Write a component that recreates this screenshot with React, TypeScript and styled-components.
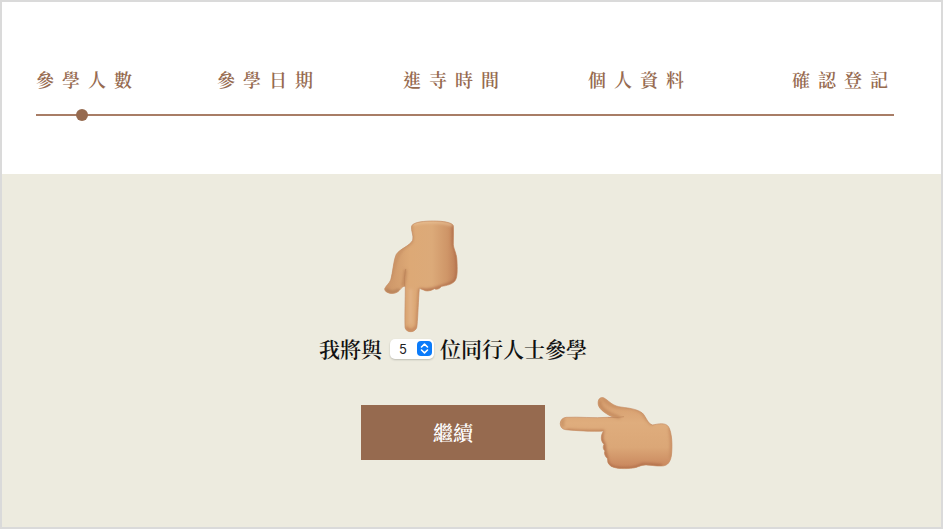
import React, { useState } from "react";
import styled, { createGlobalStyle } from "styled-components";

const brown = "#966a4f";
const cjkSerif = `"Noto Serif CJK TC", "Noto Sans CJK TC", serif`;

const GlobalStyle = createGlobalStyle`
  *, *::before, *::after { box-sizing: border-box; }
  body { margin: 0; background: #fff; font-family: ${cjkSerif}; }
`;

const Page = styled.div`
  display: flex;
  flex-direction: column;
  min-height: 100vh;
  border: 2px solid #dadada;
`;

const Header = styled.header`
  padding: 63px 47px 53px 34px;
  background: #fff;
`;

const Steps = styled.ol`
  display: grid;
  grid-template-columns: 181fr 186fr 185fr 204fr 102fr;
  margin: 0;
  padding: 0;
  list-style: none;
`;

const Step = styled.li`
  min-width: 0;
  color: ${brown};
  font-size: 18px;
  font-weight: 600;
  line-height: 28px;
  letter-spacing: 8px;
  white-space: nowrap;
`;

const Track = styled.div`
  display: flex;
  align-items: center;
  height: 12px;
  margin-top: 16px;
  padding-left: 40px;
  background: linear-gradient(#a87d66, #a87d66) center / 100% 2px no-repeat;
`;

const Dot = styled.span`
  width: 12px;
  height: 12px;
  border-radius: 50%;
  background: ${brown};
`;

const Main = styled.main`
  flex: 1;
  padding: 160px 37px 64px 0;
  background: #edebdf;
`;

const Form = styled.form`
  display: flex;
  flex-direction: column;
  align-items: center;
  gap: 43px;
`;

const Sentence = styled.label`
  display: flex;
  align-items: flex-start;
  color: #111;
  font-size: 21px;
  font-weight: 600;
  line-height: 28px;
  white-space: nowrap;
`;

const SelectWrap = styled.span`
  position: relative;
  display: flex;
  margin: 5px 6px 0 8px;
`;

const Select = styled.select`
  appearance: none;
  width: 44px;
  height: 20px;
  padding: 0 0 0 9px;
  border: 0;
  border-radius: 5px;
  background: #fff;
  box-shadow: 0 1px 2px rgba(0, 0, 0, 0.2);
  color: #222;
  font-family: Inter, sans-serif;
  font-size: 13px;
  line-height: 20px;
`;

const Arrows = styled.svg`
  position: absolute;
  top: 2px;
  right: 2px;
  width: 15px;
  height: 15px;
  pointer-events: none;
`;

const ButtonWrap = styled.div`
  position: relative;
`;

const Continue = styled.button`
  display: block;
  width: 184px;
  height: 55px;
  border: 0;
  background: ${brown};
  color: #fff;
  font-family: ${cjkSerif};
  font-size: 20px;
  font-weight: 600;
  line-height: 30px;
`;

const DownHand = styled.svg`
  position: absolute;
  top: -130px;
  left: -20px;
  width: 110px;
  height: 130px;
  pointer-events: none;
`;

const LeftHand = styled.svg`
  position: absolute;
  top: -20px;
  left: 189px;
  width: 135px;
  height: 95px;
  pointer-events: none;
`;

const steps = ["參學人數", "參學日期", "進寺時間", "個人資料", "確認登記"];

function PointingDown() {
  const outline =
    "M125 51 C130 38 168 36 190 36 C218 36 246 40 250 50 C251 65 250 91 250 107 C252 124 260 132 261 156 C262 179 263 203 256 214 C248 226 230 230 215 232 C207 241 200 242 193 239 C182 246 169 248 161 243 C155 241 151 239 148 238 C145 274 144 319 141 350 C140 373 106 374 105 353 C104 318 106 270 106 231 C98 232 94 237 89 243 C77 260 43 254 44 239 C49 229 58 223 62 213 C69 190 70 155 79 136 C90 119 119 111 128 94 C132 78 122 66 125 51 Z";
  return (
    <DownHand viewBox="0 0 330 390" aria-hidden="true">
      <defs>
        <linearGradient id="downSkin" x1="0" x2="1" y1="0" y2="0">
          <stop offset="0" stopColor="#cb9467" />
          <stop offset="0.35" stopColor="#dda976" />
          <stop offset="0.65" stopColor="#dcaa79" />
          <stop offset="0.86" stopColor="#cf9668" />
          <stop offset="1" stopColor="#bd7d56" />
        </linearGradient>
        <clipPath id="downClip"><path d={outline} /></clipPath>
        <filter id="downSoft" x="-20%" y="-20%" width="140%" height="140%">
          <feGaussianBlur stdDeviation="4" />
        </filter>
      </defs>
      <path d={outline} fill="url(#downSkin)" />
      <g clipPath="url(#downClip)">
        <g fill="none" filter="url(#downSoft)">
          <path d="M251 45 V107 C266 138 267 205 255 216 C233 230 221 230 210 235 Q180 248 150 242" stroke="#ad6b48" strokeWidth="8" />
          <path d="M125 48 C120 72 135 83 123 102 C85 121 79 146 62 211" stroke="#c48c60" strokeWidth="6" />
          <path d="M98 232 Q104 218 106 182" stroke="#bb8055" strokeWidth="7" />
          <path d="M47 241 Q66 258 89 242" stroke="#b07b55" strokeWidth="8" />
          <path d="M148 240 L141 353" stroke="#bf8159" strokeWidth="7" />
          <path d="M122 240 V345" stroke="#e2b286" strokeWidth="10" />
          <path d="M129 44 Q191 31 248 47" stroke="#ebc49a" strokeWidth="6" />
          <path d="M108 354 Q120 375 141 353" stroke="#b9744f" strokeWidth="6" />
        </g>
        <path d="M107 180 Q101 205 104 234" fill="none" stroke="#b98258" strokeWidth="2" />
      </g>
      <path d={outline} fill="none" stroke="#c48b62" strokeWidth="2" />
    </DownHand>
  );
}

function PointingLeft() {
  const outline =
    "M161 138 C129 140 76 137 47 134 C25 132 25 99 49 97 C87 95 133 100 174 97 L190 97 C174 90 149 76 145 60 C142 44 150 34 162 39 C174 45 184 60 206 65 C230 69 258 70 277 84 C289 96 293 117 308 120 C323 117 347 111 356 126 C366 145 367 178 365 204 C363 231 353 243 335 243 C319 244 303 240 289 240 C272 239 263 249 241 250 C219 252 187 251 178 239 C169 230 177 221 168 216 C162 207 163 201 165 198 C158 192 159 184 162 178 C152 169 151 151 161 138 Z";
  return (
    <LeftHand viewBox="0 0 405 285" aria-hidden="true">
      <defs>
        <linearGradient id="leftSkin" x1="0" x2="0" y1="0" y2="1">
          <stop offset="0" stopColor="#d39a6b" />
          <stop offset="0.35" stopColor="#dfad7d" />
          <stop offset="0.7" stopColor="#dba777" />
          <stop offset="1" stopColor="#c8855c" />
        </linearGradient>
        <clipPath id="leftClip"><path d={outline} /></clipPath>
        <filter id="leftSoft" x="-20%" y="-20%" width="140%" height="140%">
          <feGaussianBlur stdDeviation="4" />
        </filter>
      </defs>
      <path d={outline} fill="url(#leftSkin)" />
      <g clipPath="url(#leftClip)">
        <g fill="none" filter="url(#leftSoft)">
          <path d="M48 136 Q105 140 163 138" stroke="#bd7f55" strokeWidth="8" />
          <path d="M157 143 Q149 160 162 179 L164 199 L170 221 Q169 254 226 251 Q261 250 277 239 Q307 239 336 243" stroke="#af6d48" strokeWidth="9" />
          <path d="M149 47 Q144 78 210 98" stroke="#be8256" strokeWidth="7" />
          <path d="M160 41 Q182 67 214 67 Q254 66 277 84 Q290 108 308 120" stroke="#c58b5f" strokeWidth="6" />
          <path d="M359 128 Q368 169 362 222" stroke="#c78b60" strokeWidth="8" />
          <path d="M43 102 Q31 111 40 126" stroke="#c58d60" strokeWidth="8" />
        </g>
        <path d="M174 97 Q204 99 222 95" fill="none" stroke="#bd855b" strokeWidth="2" />
      </g>
      <path d={outline} fill="none" stroke="#c68d63" strokeWidth="2" />
    </LeftHand>
  );
}

export default function App() {
  const [count, setCount] = useState("5");
  return (
    <>
      <GlobalStyle />
      <Page>
        <Header>
          <Steps>
            {steps.map((name, index) => (
              <Step key={name} aria-current={index === 0 ? "step" : undefined}>{name}</Step>
            ))}
          </Steps>
          <Track><Dot /></Track>
        </Header>
        <Main>
          <Form onSubmit={(event: React.FormEvent) => event.preventDefault()}>
            <Sentence htmlFor="companions">
              <span>我將與</span>
              <SelectWrap>
                <Select id="companions" value={count} onChange={(event) => setCount(event.target.value)}>
                  {["1", "2", "3", "4", "5", "6"].map((value) => (
                    <option key={value}>{value}</option>
                  ))}
                </Select>
                <Arrows viewBox="0 0 15 15" aria-hidden="true">
                  <rect width="15" height="15" rx="4" fill="#0a7bfa" />
                  <path d="M4.5 6 7.5 3.2 10.5 6M4.5 9 7.5 11.8 10.5 9" fill="none" stroke="#fff" strokeWidth="1.6" strokeLinecap="round" strokeLinejoin="round" />
                </Arrows>
                <PointingDown />
              </SelectWrap>
              <span>位同行人士參學</span>
            </Sentence>
            <ButtonWrap>
              <Continue type="submit">繼續</Continue>
              <PointingLeft />
            </ButtonWrap>
          </Form>
        </Main>
      </Page>
    </>
  );
}
